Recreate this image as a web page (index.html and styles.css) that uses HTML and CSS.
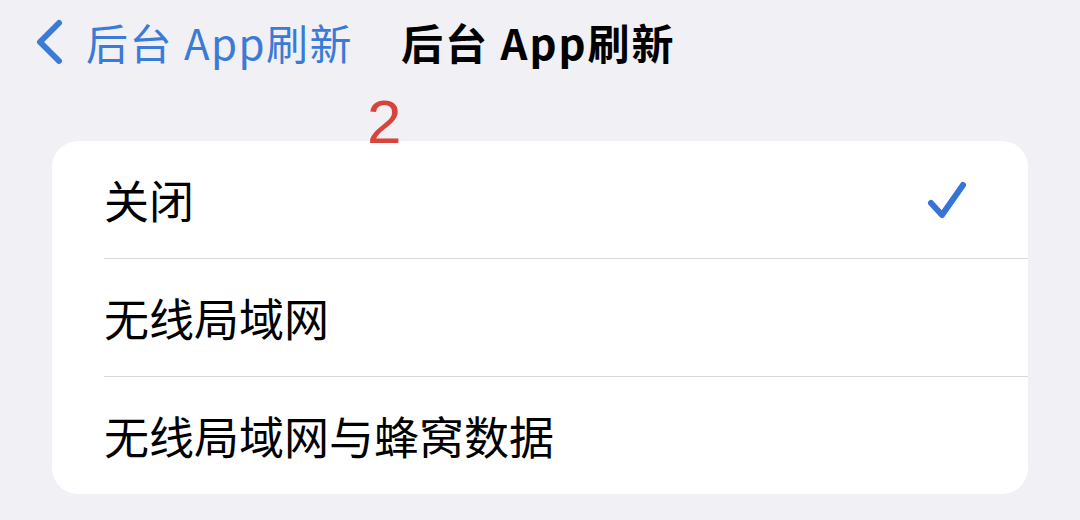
FILE: index.html
```html
<!DOCTYPE html>
<html lang="zh-CN">
<head>
  <meta charset="UTF-8">
  <title>后台 App刷新</title>
  <link rel="stylesheet" href="styles.css">
</head>
<body>
  <header class="nav">
    <a class="back" href="#">
      <svg class="chevron" width="30" height="46" viewBox="0 0 30 46">
        <path d="M25 4 L6 23 L25 42" fill="none" stroke="currentColor" stroke-width="6" stroke-linecap="round" stroke-linejoin="round"/>
      </svg>
      <span class="back-label">后台 App刷新</span>
    </a>
    <h1 class="title">后台 App刷新</h1>
  </header>

  <div class="marker">2</div>

  <ul class="options">
    <li class="option">
      <div class="option-inner">
        <span>关闭</span>
        <svg class="check" width="42" height="40" viewBox="0 0 42 40">
          <path d="M5 23 L16 35 L37 5" fill="none" stroke="currentColor" stroke-width="6" stroke-linecap="round" stroke-linejoin="round"/>
        </svg>
      </div>
    </li>
    <li class="option">
      <div class="option-inner"><span>无线局域网</span></div>
    </li>
    <li class="option">
      <div class="option-inner"><span>无线局域网与蜂窝数据</span></div>
    </li>
  </ul>
</body>
</html>
```

FILE: styles.css
```css
body {
  margin: 0;
  background: #f0f0f5;
  font-family: "Noto Sans CJK SC", "Noto Sans", sans-serif;
  color: #000;
}

.nav {
  display: flex;
  align-items: center;
  height: 52px;
  padding: 16px 0 0 34px;
}

.back {
  display: flex;
  align-items: center;
  gap: 22px;
  color: #3b7ad6;
  text-decoration: none;
}

.chevron {
  display: block;
}

.back-label {
  font-size: 42px;
  letter-spacing: 1.5px;
  line-height: 52px;
}

.title {
  margin: 0 0 0 48px;
  font-size: 42px;
  font-weight: 700;
  letter-spacing: 2px;
  line-height: 52px;
}

.marker {
  position: relative;
  z-index: 1;
  height: 49px;
  padding: 24px 0 0 367px;
  font-family: "Liberation Sans", Arial, sans-serif;
  font-size: 62px;
  line-height: 60px;
  color: #d8443a;
}

.options {
  list-style: none;
  margin: 0 52px;
  padding: 0;
  background: #fff;
  border-radius: 26px;
  overflow: hidden;
}

.option {
  padding-left: 52px;
}

.option-inner {
  display: flex;
  align-items: center;
  justify-content: space-between;
  height: 117px;
  padding-right: 60px;
  border-bottom: 1.5px solid #d9d9dd;
  font-size: 45px;
}

.option:last-child .option-inner {
  border-bottom: none;
}

.check {
  display: block;
  color: #3574d9;
}
```
